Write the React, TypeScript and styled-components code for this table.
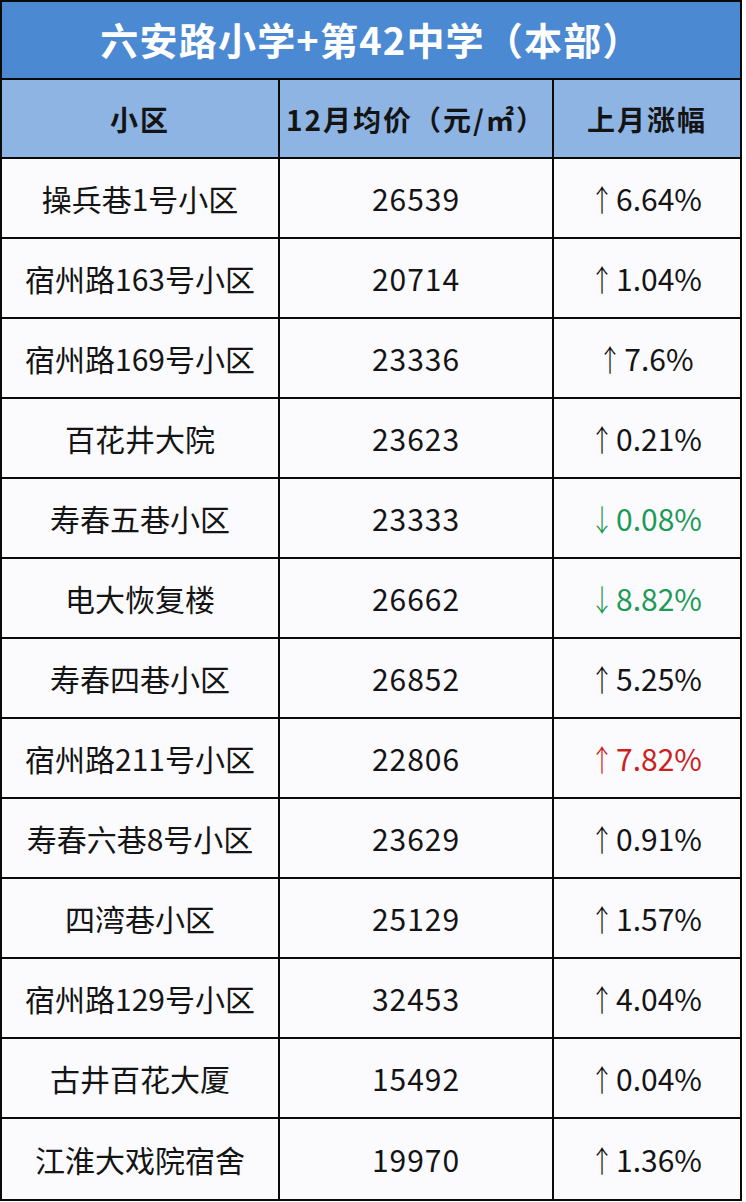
import React from 'react';
import styled, { createGlobalStyle } from 'styled-components';

const GlobalStyle = createGlobalStyle`
  html, body {
    margin: 0;
    padding: 0;
    background: #ffffff;
  }
  body {
    font-family: "Noto Sans CJK SC", "Noto Sans", sans-serif;
  }
`;

const Frame = styled.div`
  width: 742px;
  box-sizing: border-box;
  border: 2px solid #0a0a0a;
  background: #fbfafc;
`;

const Title = styled.div`
  height: 78px;
  border-bottom: 2px solid #0a0a0a;
  background: #4c89d3;
  color: #ffffff;
  font-size: 38px;
  font-weight: 700;
  display: flex;
  align-items: center;
  justify-content: center;
  letter-spacing: 1.2px;
  padding-bottom: 4px;
  box-sizing: border-box;
`;

const Row = styled.div<{ $head?: boolean; $last?: boolean }>`
  display: grid;
  grid-template-columns: 278px 274px 186px;
  height: ${({ $head }) => ($head ? '79px' : '80px')};
  box-sizing: border-box;
  border-bottom: ${({ $last }) => ($last ? 'none' : '2px solid #0a0a0a')};
  background: ${({ $head }) => ($head ? '#8eb4e3' : 'transparent')};
`;

const Cell = styled.div<{ $head?: boolean; $tone?: 'plain' | 'down' | 'hot'; $edge?: boolean }>`
  display: flex;
  align-items: center;
  justify-content: center;
  box-sizing: border-box;
  border-right: ${({ $edge }) => ($edge ? 'none' : '2px solid #0a0a0a')};
  font-size: ${({ $head }) => ($head ? '28px' : '30px')};
  font-weight: ${({ $head }) => ($head ? 700 : 400)};
  letter-spacing: ${({ $head }) => ($head ? '2px' : '0')};
  color: ${({ $tone }) => ($tone === 'down' ? '#1d9a58' : $tone === 'hot' ? '#cc1f1f' : '#141414')};
  white-space: nowrap;
`;

const Num = styled.span`
  letter-spacing: 1px;
`;

const Arrow = styled.span`
  display: inline-block;
  font-weight: 300;
  transform: scaleX(0.8);
  margin-right: -1px;
  margin-left: -5px;
`;

type Tone = 'plain' | 'down' | 'hot';

const rows: { name: string; price: string; change: string; tone: Tone }[] = [
  { name: '操兵巷1号小区', price: '26539', change: '↑6.64%', tone: 'plain' },
  { name: '宿州路163号小区', price: '20714', change: '↑1.04%', tone: 'plain' },
  { name: '宿州路169号小区', price: '23336', change: '↑7.6%', tone: 'plain' },
  { name: '百花井大院', price: '23623', change: '↑0.21%', tone: 'plain' },
  { name: '寿春五巷小区', price: '23333', change: '↓0.08%', tone: 'down' },
  { name: '电大恢复楼', price: '26662', change: '↓8.82%', tone: 'down' },
  { name: '寿春四巷小区', price: '26852', change: '↑5.25%', tone: 'plain' },
  { name: '宿州路211号小区', price: '22806', change: '↑7.82%', tone: 'hot' },
  { name: '寿春六巷8号小区', price: '23629', change: '↑0.91%', tone: 'plain' },
  { name: '四湾巷小区', price: '25129', change: '↑1.57%', tone: 'plain' },
  { name: '宿州路129号小区', price: '32453', change: '↑4.04%', tone: 'plain' },
  { name: '古井百花大厦', price: '15492', change: '↑0.04%', tone: 'plain' },
  { name: '江淮大戏院宿舍', price: '19970', change: '↑1.36%', tone: 'plain' },
];

export default function App() {
  return (
    <>
      <GlobalStyle />
      <Frame>
        <Title>六安路小学+第42中学（本部）</Title>
        <Row $head>
          <Cell $head>小区</Cell>
          <Cell $head>12月均价（元/㎡）</Cell>
          <Cell $head $edge>上月涨幅</Cell>
        </Row>
        {rows.map((r, i) => (
          <Row key={r.name} $last={i === rows.length - 1}>
            <Cell>{r.name}</Cell>
            <Cell>
              <Num>{r.price}</Num>
            </Cell>
            <Cell $edge $tone={r.tone}>
              <Arrow>{r.change.charAt(0)}</Arrow>
              {r.change.slice(1)}
            </Cell>
          </Row>
        ))}
      </Frame>
    </>
  );
}
